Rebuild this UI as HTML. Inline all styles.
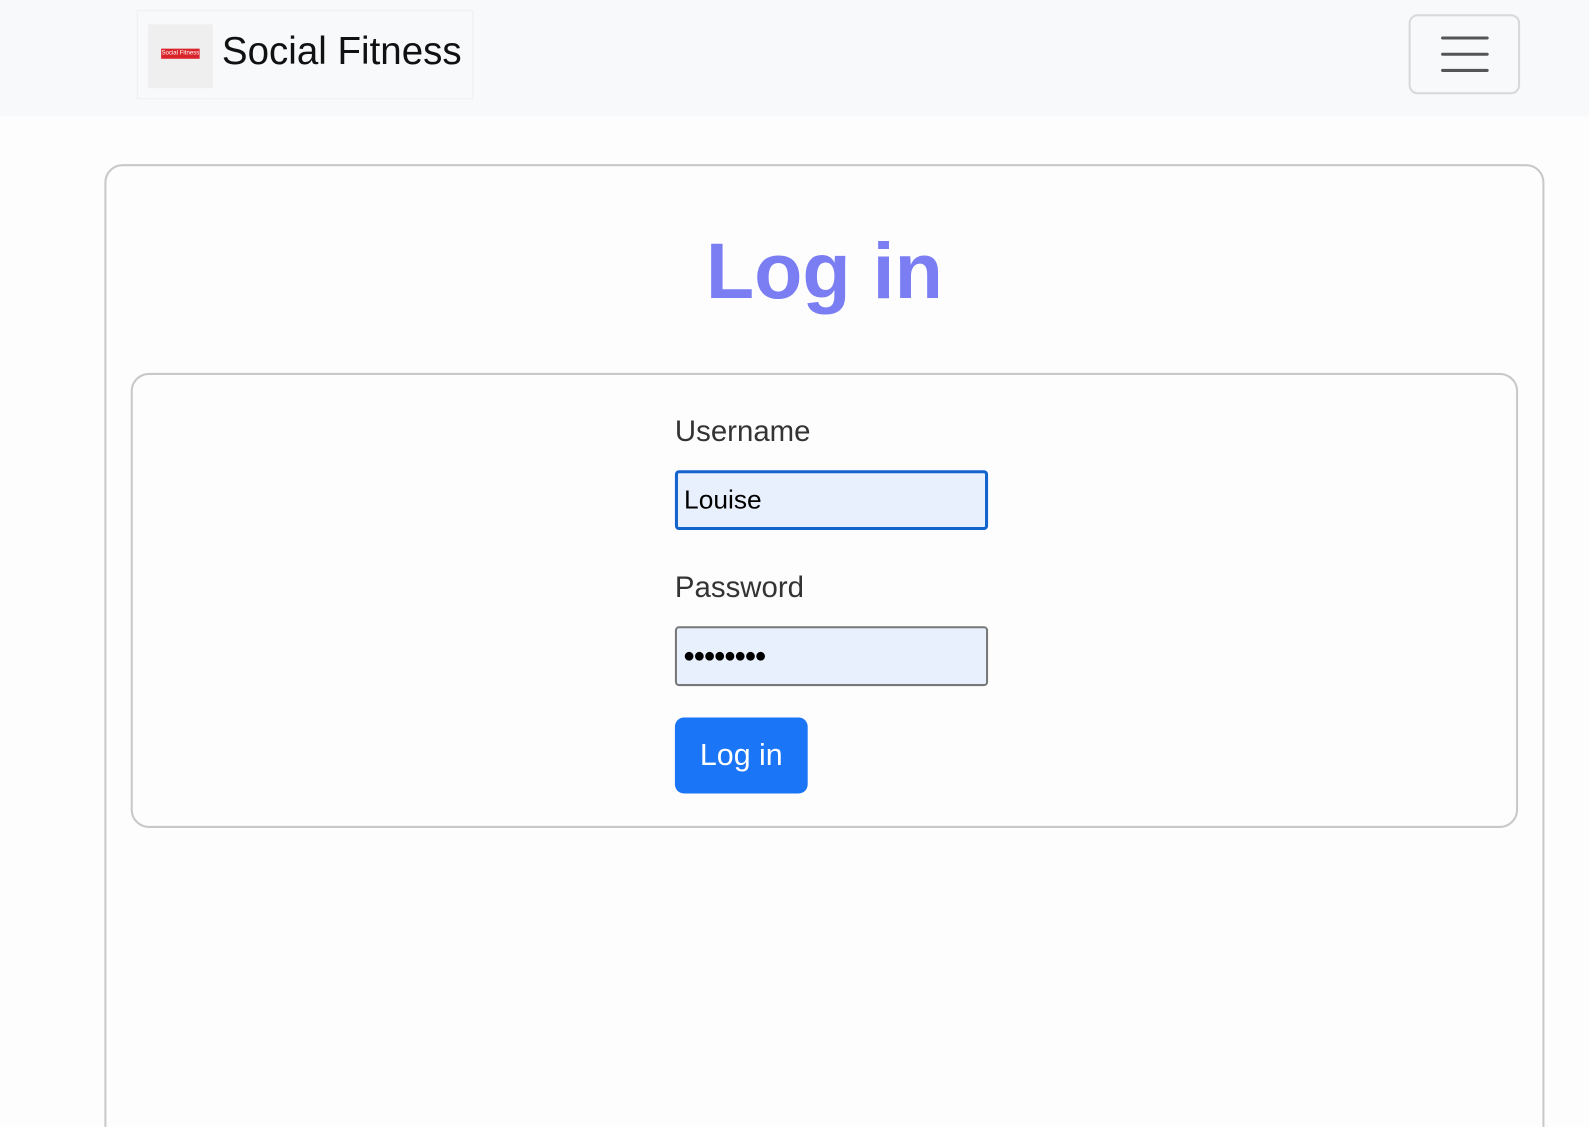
<!DOCTYPE html>
<html style="overflow:hidden;width:1589px;height:1127px"><head><meta charset="utf-8"><style>
*{box-sizing:border-box;margin:0;padding:0}
body{width:1589px;height:1127px;overflow:hidden;background:#fdfdfd;font-family:"Liberation Sans",sans-serif;position:relative}
#clip{position:absolute;left:0;top:0;width:1589px;height:1127px;overflow:hidden}
#w{position:absolute;left:0;top:0;width:1568px;height:1112px;transform:scale(1.0134);transform-origin:0 0;overflow:hidden}
.nav{position:absolute;left:0;top:0;width:1589px;height:114px;background:#f8f9fa}
.brand{position:absolute;left:135px;top:10px;width:332px;height:88px;border:1px solid #eeeff0;white-space:nowrap}
.logo{position:absolute;left:10px;top:13px;width:64px;height:63px;background:#efefef}
.logo i{position:absolute;left:13px;top:24px;width:38px;height:10px;background:#d9242b;color:#fff;font-size:6px;font-style:normal;text-align:center;line-height:10px;overflow:hidden}
.brand span{position:absolute;left:83px;top:19px;font-size:38px;color:#111}
.tog{position:absolute;left:1390px;top:14px;width:110px;height:79px;border:2px solid #d6d8da;border-radius:9px}
.tog b{position:absolute;left:30px;width:47px;height:3px;background:#555;border-radius:2px}
.card{position:absolute;left:103px;top:162px;width:1421px;height:1100px;border:2px solid #c8c8c8;border-radius:18px}
h1{position:absolute;left:0;width:1627px;top:222px;text-align:center;font-size:78px;font-weight:bold;color:#7a7ef2}
.inner{position:absolute;left:129px;top:368px;width:1369px;height:449px;border:2px solid #c8c8c8;border-radius:18px}
.lbl{position:absolute;left:666px;font-size:29px;color:#333}
.inp{position:absolute;left:666px;width:309px;height:59px;background:#e9f0fd;border-radius:4px}
.btn{position:absolute;left:666px;top:708px;width:131px;height:75px;background:#1a75f7;border-radius:9px;color:#fff;font-size:30px;text-align:center;line-height:75px}
</style></head><body><div id="clip"><div id="w">
<div class="nav">
<div class="brand"><div class="logo"><i>Social Fitness</i></div><span>Social Fitness</span></div>
<div class="tog"><b style="top:20px"></b><b style="top:36px"></b><b style="top:52px"></b></div>
</div>
<div class="card"></div>
<h1>Log in</h1>
<div class="inner"></div>
<div class="lbl" style="top:410px">Username</div>
<div class="inp" style="top:464px;border:3px solid #1263ce;font-size:26px;padding-left:6px;line-height:53px;color:#000">Louise</div>
<div class="lbl" style="top:564px">Password</div>
<div class="inp" style="top:618px;border:2px solid #777;font-size:20px;padding-left:6px;line-height:54px;color:#000;letter-spacing:-2px">●●●●●●●●</div>
<div class="btn">Log in</div>
</div></div></body></html>
